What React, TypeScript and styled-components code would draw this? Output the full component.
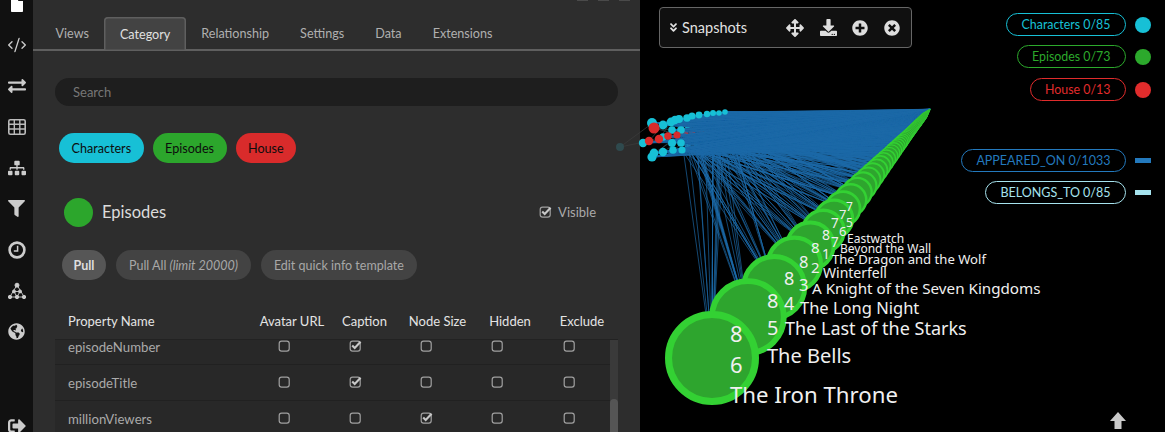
import { ReactNode } from "react";
import styled, { createGlobalStyle } from "styled-components";
import {
  FaAngleDoubleDown,
  FaArrowsAlt,
  FaDownload,
  FaExchangeAlt,
  FaFile,
  FaFilter,
  FaGlobeAmericas,
  FaPlusCircle,
  FaSignOutAlt,
  FaSitemap,
  FaTimesCircle,
} from "react-icons/fa";
import { CodeXml } from "lucide-react";

const CYAN = "#17c0d6";
const GREEN = "#2ca62c";
const RED = "#d92b2b";

const GlobalStyle = createGlobalStyle`
  html, body {
    margin: 0;
    height: 100%;
    background: #000;
    overflow: hidden;
    font-family: "Lato", "Liberation Sans", sans-serif;
  }
`;

const Page = styled.div`
  display: flex;
  width: 1165px;
  height: 432px;
  overflow: hidden;
`;

const Sidebar = styled.nav`
  width: 33px;
  flex-shrink: 0;
  height: 432px;
  background: #111;
  display: flex;
  flex-direction: column;
  align-items: center;
  color: #ccc;
  overflow: hidden;
`;

const SideItem = styled.div<{ $first?: boolean; $last?: boolean }>`
  height: 41px;
  flex-shrink: 0;
  width: 100%;
  display: flex;
  align-items: center;
  justify-content: center;
  margin-top: ${(p) => (p.$first ? "-17px" : p.$last ? "auto" : "0")};
  margin-bottom: ${(p) => (p.$last ? "-14px" : "0")};
`;

const Panel = styled.section`
  width: 607px;
  flex-shrink: 0;
  height: 432px;
  background: #2d2d2d;
  overflow: hidden;
  display: flex;
  flex-direction: column;
`;

const WindowStubs = styled.div`
  height: 2px;
  display: flex;
  justify-content: flex-end;
  gap: 10px;
  padding-right: 10px;
  flex-shrink: 0;

  span {
    width: 11px;
    height: 1px;
    background: #4a4a4a;
  }
`;

const Tabs = styled.div`
  height: 49px;
  box-sizing: border-box;
  padding: 15px 0 0 7px;
  display: flex;
  align-items: stretch;
  border-bottom: 2px solid #5f5f5f;
  flex-shrink: 0;
`;

const Tab = styled.div<{ $active?: boolean }>`
  display: flex;
  align-items: center;
  padding: 0 15.5px;
  margin: ${(p) => (p.$active ? "0 0 -2px" : "0 0 0")};
  font-size: 12.6px;
  color: ${(p) => (p.$active ? "#e0e0e0" : "#b0b0b0")};
  background: ${(p) => (p.$active ? "#434343" : "transparent")};
  box-shadow: ${(p) => (p.$active ? "inset 0 0 0 1.5px #5f5f5f" : "none")};
  border-radius: 4px 4px 0 0;
`;

const Content = styled.div`
  padding: 27px 22px 0 22px;
  display: flex;
  flex-direction: column;
`;

const Search = styled.div`
  height: 28px;
  border-radius: 14px;
  background: #1e1e1e;
  color: #777;
  font-size: 13px;
  display: flex;
  align-items: center;
  padding-left: 18px;
`;

const Chips = styled.div`
  display: flex;
  gap: 9px;
  margin: 27px 0 0 4px;
`;

const Chip = styled.div<{ $color: string }>`
  height: 30px;
  padding: 0 12.5px;
  border-radius: 15px;
  background: ${(p) => p.$color};
  color: #0d0d0d;
  font-size: 12.6px;
  display: flex;
  align-items: center;
`;

const CategoryHead = styled.div`
  display: flex;
  align-items: center;
  margin: 34px 0 0 9px;
  height: 30px;
`;

const Swatch = styled.span<{ $color: string }>`
  width: 29px;
  height: 29px;
  border-radius: 50%;
  background: ${(p) => p.$color};
`;

const CategoryName = styled.span`
  margin-left: 9px;
  font-size: 16.5px;
  color: #dcdcdc;
  flex: 1;
`;

const Visible = styled.label`
  display: flex;
  align-items: center;
  gap: 6px;
  font-size: 13px;
  color: #aaa;
  margin-right: 22px;
`;

const Actions = styled.div`
  display: flex;
  gap: 10px;
  margin: 23px 0 0 7px;
`;

const Action = styled.div<{ $primary?: boolean }>`
  height: 30px;
  padding: 0 ${(p) => (p.$primary ? "11.5px" : "13px")};
  border-radius: 15px;
  display: flex;
  align-items: center;
  gap: 3px;
  font-size: 12.5px;
  font-weight: ${(p) => (p.$primary ? 700 : 400)};
  background: ${(p) => (p.$primary ? "#565656" : "#434343")};
  color: ${(p) => (p.$primary ? "#dedede" : "#a8a8a8")};

  em {
    font-style: italic;
  }
`;

const HeaderRow = styled.div`
  display: grid;
  grid-template-columns: 201px 72px 73px 73px 72px 72px;
  margin-top: 27px;
  height: 32px;
  box-sizing: border-box;
  align-items: center;
  font-size: 13px;
  color: #e4e4e4;
  justify-items: center;
  padding-bottom: 4px;
`;

const HeaderName = styled.span`
  justify-self: start;
  padding-left: 13px;
`;

const TableBody = styled.div`
  position: relative;
  height: 120px;
  background: #282828;
  overflow: hidden;
  border-top: 1px solid #222;
`;

const Row = styled.div<{ $first?: boolean }>`
  display: grid;
  grid-template-columns: 193px 72px 71px 71px 71px 72px;
  height: 36px;
  box-sizing: border-box;
  margin-top: ${(p) => (p.$first ? "-11px" : "0")};
  align-items: center;
  justify-items: center;
  border-bottom: 1px solid #212121;
  font-size: 13.2px;
  color: #aaa;
`;

const RowName = styled.span`
  justify-self: start;
  padding-left: 13px;
`;

const ScrollTrack = styled.div`
  position: absolute;
  top: 0;
  right: 0;
  bottom: 0;
  width: 8px;
  background: #3a3a3a;
`;

const ScrollThumb = styled.div`
  position: absolute;
  top: 59px;
  left: 0;
  right: 0;
  bottom: 0;
  border-radius: 4px 4px 0 0;
  background: #555;
`;

const Canvas = styled.main`
  position: relative;
  flex: 1;
  height: 432px;
  background: #000;
`;

const GraphSvg = styled.svg`
  position: absolute;
  left: 0;
  top: 0;
  overflow: visible;
`;

const NodeLabel = styled.text`
  font-family: "Noto Sans", "Open Sans", sans-serif;
  fill: #f0f0f0;
  dominant-baseline: central;
`;

const SnapshotBar = styled.div`
  position: absolute;
  left: 19px;
  top: 7px;
  width: 253px;
  height: 41px;
  box-sizing: border-box;
  background: #101010;
  border: 1px solid #666;
  border-radius: 4px;
  display: flex;
  align-items: center;
  padding-left: 8px;
  color: #e2e2e2;
`;

const SnapshotTitle = styled.span`
  font-size: 14.5px;
  margin-left: 3px;
  margin-right: 39px;
`;

const SnapshotIcons = styled.div`
  display: flex;
  align-items: center;
  gap: 15.5px;
  color: #ddd;
`;

const Legend = styled.div`
  position: absolute;
  right: 14px;
  top: 13px;
  display: flex;
  flex-direction: column;
  align-items: flex-end;
`;

const LegendRow = styled.div<{ $gap: number }>`
  display: flex;
  align-items: center;
  gap: 9px;
  height: 23px;
  margin-bottom: ${(p) => p.$gap}px;
`;

const LegendPill = styled.div<{ $color: string; $size: number }>`
  height: 23px;
  box-sizing: border-box;
  border: 1px solid ${(p) => p.$color};
  border-radius: 12px;
  color: ${(p) => p.$color};
  font-size: ${(p) => p.$size}px;
  display: flex;
  align-items: center;
  padding: 0 14.5px;
`;

const LegendDot = styled.span<{ $color: string }>`
  width: 16px;
  height: 16px;
  border-radius: 50%;
  background: ${(p) => p.$color};
`;

const LegendLine = styled.span<{ $color: string }>`
  width: 16px;
  height: 5px;
  background: ${(p) => p.$color};
`;

const UpArrow = styled.svg`
  position: absolute;
  left: 470px;
  top: 412px;
`;

const CheckBox = ({ checked }: { checked?: boolean }) => (
  <svg width="13" height="13" viewBox="0 0 13 13" fill="none">
    <rect x="1.2" y="1.2" width="10" height="10" rx="2.4" stroke="#a0a0a0" strokeWidth="1.2" />
    {checked && <path d="M3.2 5.4 L5.7 8 L11.6 1.8" stroke="#c8c8c8" strokeWidth="2.1" />}
  </svg>
);

const GridIcon = () => (
  <svg width="18" height="16" viewBox="0 0 18 16" fill="none" stroke="#bbb">
    <rect x="0.8" y="0.8" width="16.4" height="14.4" rx="1.5" strokeWidth="1.6" />
    <path d="M0.8 5.3 H17.2 M0.8 10 H17.2 M6.3 1 V15 M11.8 1 V15" strokeWidth="1.4" />
  </svg>
);

const ClockIcon = () => (
  <svg width="18" height="18" viewBox="0 0 18 18" fill="none" stroke="#ccc">
    <circle cx="9" cy="9" r="7.4" strokeWidth="2.6" />
    <path d="M9.6 4.8 V10 H5.8" strokeWidth="1.5" />
  </svg>
);

const HubIcon = () => (
  <svg width="18" height="18" viewBox="0 0 18 18" fill="#ccc" stroke="#ccc">
    <path d="M9 3 L1.8 15 H16.2 Z M6 9.5 H12 L9 15 Z" fill="none" strokeWidth="0.9" />
    <circle cx="9" cy="3.2" r="2" />
    <circle cx="6" cy="9.4" r="1.5" />
    <circle cx="12" cy="9.4" r="1.5" />
    <circle cx="2" cy="15" r="1.7" />
    <circle cx="9" cy="15" r="1.7" />
    <circle cx="16" cy="15" r="1.7" />
  </svg>
);

type CharNode = { x: number; y: number; r: number; color: string };

const row = (pts: number[][], color: string): CharNode[] =>
  pts.map(([x, y, r]) => ({ x, y, r, color }));

const houses = row(
  [
    [654, 128, 5.5], [649, 141, 4.2], [659, 139, 4.2], [668, 136, 3.8], [677, 135, 3.6], [685, 133, 3.4],
    [692, 132, 3], [701, 131, 2.8], [707, 130, 2.6], [715, 128, 2.4], [722, 128, 2.2], [728, 127, 2],
  ],
  RED
);

const topRow = row(
  [
    [652, 123, 5], [663, 125, 4.4], [671, 122, 4.4], [675, 120, 4.2], [679, 119, 4], [687, 118, 3.8],
    [692, 116, 3.6], [699, 115, 3.4], [707, 114, 3.2], [713, 113, 3], [719, 113, 2.8], [725, 112, 2.8],
  ],
  CYAN
);

const lowerRows = row(
  [
    [672, 130, 3.8], [681, 130, 3.8], [688, 125, 3.6], [697, 123, 3.4], [705, 123, 3.2], [713, 120, 3], [722, 116, 2.8],
    [643, 143, 4.2], [663, 137, 3.8], [672, 143, 4], [681, 143, 3.8], [688, 142, 3.6], [697, 140, 3.4],
    [705, 137, 3], [713, 135, 2.8], [720, 132, 2.6], [652, 157, 4.6], [654, 153, 4.4], [663, 152, 4.2],
    [673, 150, 3.8], [682, 150, 3.6], [688, 148, 3.4], [697, 146, 3], [705, 143, 2.8],
  ],
  CYAN
);

const characters = [...topRow, ...lowerRows];
const farNodes = [...lowerRows, ...houses].filter((n) => n.x >= 685);
const nearNodes = [...topRow, ...lowerRows.filter((n) => n.x < 685), ...houses.filter((n) => n.x < 685)];
const fanSources = characters.filter((n) => n.x >= 676);

const episodes = Array.from({ length: 73 }, (_, i) => {
  const s = 1 / (1 + 0.18 * i);
  const taper = Math.min(1, (72 - i) / 25 + 0.2);
  return {
    i,
    x: 712 + 235 * (1 - s),
    y: 358 - 268 * (1 - s),
    r: 47 * Math.pow(s, 1.15) * taper,
  };
});

// small seeded generator so the edges are the same on every render
let seed = 7;
const rand = () => {
  seed = (seed * 16807) % 2147483647;
  return seed / 2147483647;
};

const edges = episodes.flatMap((ep) => {
  const pool = ep.i < 22 ? fanSources : characters;
  return Array.from({ length: ep.i < 12 ? 14 : 18 }, () => {
    const from = pool[Math.floor(rand() * pool.length)];
    return { x1: from.x, y1: from.y, x2: ep.x, y2: ep.y };
  });
});

const belongs = characters.slice(0, 32).map((c, i) => {
  const h = houses[i % houses.length];
  return { x1: c.x, y1: c.y, x2: h.x, y2: h.y };
});

const labels: [number, number, number, string][] = [
  [847, 238, 12, "Eastwatch"],
  [846, 222, 12, "5"],
  [846, 206, 12, "7"],
  [840, 248, 12, "Beyond the Wall"],
  [839, 231, 13, "6"],
  [839, 214, 13, "7"],
  [832, 259, 13.1, "The Dragon and the Wolf"],
  [831, 242, 13.5, "7"],
  [831, 223, 13.5, "7"],
  [823, 272, 14, "Winterfell"],
  [822, 253, 14, "1"],
  [822, 234, 14, "8"],
  [812, 288, 15.2, "A Knight of the Seven Kingdoms"],
  [811, 267, 15, "2"],
  [811, 247, 15, "8"],
  [800, 307, 16.5, "The Long Night"],
  [799, 284, 16.5, "3"],
  [799, 261, 16.5, "8"],
  [785, 328, 18, "The Last of the Starks"],
  [784, 303, 18, "4"],
  [784, 278, 18, "8"],
  [767, 355, 20, "The Bells"],
  [767, 327, 20, "5"],
  [767, 300, 20, "8"],
  [730, 394, 22.2, "The Iron Throne"],
  [730, 364, 22, "6"],
  [730, 333, 22, "8"],
];

const Graph = () => (
  <GraphSvg width="525" height="432" viewBox="640 0 525 432">
    <path d="M620 147 L650 125 M620 147 L649 141" stroke="#3c3c3c" strokeWidth="0.7" />
    <circle cx="620" cy="147" r="4" fill="#2f4a4e" />
    {belongs.map((e, i) => (
      <line key={i} x1={e.x1} y1={e.y1} x2={e.x2} y2={e.y2} stroke="#46646a" strokeWidth="0.5" />
    ))}
    {farNodes.map((n, i) => (
      <circle key={i} cx={n.x} cy={n.y} r={n.r} fill={n.color} />
    ))}
    {edges.map((e, i) => (
      <line key={i} x1={e.x1} y1={e.y1} x2={e.x2} y2={e.y2} stroke="#1c6aa8" strokeWidth="0.8" strokeOpacity="0.85" />
    ))}
    {nearNodes.map((n, i) => (
      <circle key={i} cx={n.x} cy={n.y} r={n.r} fill={n.color} />
    ))}
    {[...episodes].reverse().map((ep) => {
      const ring = Math.max(ep.r * 0.15, 0.5);
      return (
        <circle
          key={ep.i}
          cx={ep.x}
          cy={ep.y}
          r={ep.r - ring / 2}
          fill="#2ea52e"
          stroke="#33d133"
          strokeWidth={ring}
        />
      );
    })}
    {labels.map(([x, y, size, text], i) => (
      <NodeLabel key={i} x={x} y={y} fontSize={size}>
        {text}
      </NodeLabel>
    ))}
  </GraphSvg>
);

const sideIcons: ReactNode[] = [
  <FaFile size={16} color="#fff" />,
  <CodeXml size={20} strokeWidth={1.6} />,
  <FaExchangeAlt size={18} />,
  <GridIcon />,
  <FaSitemap size={18} />,
  <FaFilter size={17} />,
  <ClockIcon />,
  <HubIcon />,
  <FaGlobeAmericas size={17} />,
];

const tabNames = ["Views", "Category", "Relationship", "Settings", "Data", "Extensions"];

const properties = [
  { name: "episodeNumber", checks: [false, true, false, false, false] },
  { name: "episodeTitle", checks: [false, true, false, false, false] },
  { name: "millionViewers", checks: [false, false, true, false, false] },
];

const legendNodes = [
  { label: "Characters 0/85", color: CYAN, gap: 9 },
  { label: "Episodes 0/73", color: "#2ca92c", gap: 10 },
  { label: "House 0/13", color: "#e02c2c", gap: 48 },
];

const App = () => (
  <>
    <GlobalStyle />
    <Page>
      <Sidebar>
        {sideIcons.map((icon, i) => (
          <SideItem key={i} $first={i === 0}>
            {icon}
          </SideItem>
        ))}
        <SideItem $last>
          <FaSignOutAlt size={18} />
        </SideItem>
      </Sidebar>

      <Panel>
        <WindowStubs>
          <span />
          <span />
          <span />
        </WindowStubs>
        <Tabs>
          {tabNames.map((name) => (
            <Tab key={name} $active={name === "Category"}>
              {name}
            </Tab>
          ))}
        </Tabs>
        <Content>
          <Search>Search</Search>
          <Chips>
            <Chip $color={CYAN}>Characters</Chip>
            <Chip $color={GREEN}>Episodes</Chip>
            <Chip $color={RED}>House</Chip>
          </Chips>
          <CategoryHead>
            <Swatch $color={GREEN} />
            <CategoryName>Episodes</CategoryName>
            <Visible>
              <CheckBox checked />
              Visible
            </Visible>
          </CategoryHead>
          <Actions>
            <Action $primary>Pull</Action>
            <Action>
              Pull All <em>(limit 20000)</em>
            </Action>
            <Action>Edit quick info template</Action>
          </Actions>
          <HeaderRow>
            <HeaderName>Property Name</HeaderName>
            <span>Avatar URL</span>
            <span>Caption</span>
            <span>Node Size</span>
            <span>Hidden</span>
            <span>Exclude</span>
          </HeaderRow>
          <TableBody>
            {properties.map((p, i) => (
              <Row key={p.name} $first={i === 0}>
                <RowName>{p.name}</RowName>
                {p.checks.map((c, j) => (
                  <CheckBox key={j} checked={c} />
                ))}
              </Row>
            ))}
            <ScrollTrack>
              <ScrollThumb />
            </ScrollTrack>
          </TableBody>
        </Content>
      </Panel>

      <Canvas>
        <Graph />
        <SnapshotBar>
          <FaAngleDoubleDown size={11} />
          <SnapshotTitle>Snapshots</SnapshotTitle>
          <SnapshotIcons>
            <FaArrowsAlt size={18} />
            <FaDownload size={17} />
            <FaPlusCircle size={16} />
            <FaTimesCircle size={16} />
          </SnapshotIcons>
        </SnapshotBar>
        <Legend>
          {legendNodes.map((n) => (
            <LegendRow key={n.label} $gap={n.gap}>
              <LegendPill $color={n.color} $size={12.4}>{n.label}</LegendPill>
              <LegendDot $color={n.color} />
            </LegendRow>
          ))}
          <LegendRow $gap={9}>
            <LegendPill $color="#2379bd" $size={12.5}>APPEARED_ON 0/1033</LegendPill>
            <LegendLine $color="#2379bd" />
          </LegendRow>
          <LegendRow $gap={0}>
            <LegendPill $color="#a6e3ee" $size={12.5}>BELONGS_TO 0/85</LegendPill>
            <LegendLine $color="#a6e3ee" />
          </LegendRow>
        </Legend>
        <UpArrow width="16" height="18" viewBox="0 0 16 18">
          <path d="M8 0 L16 9 H11.5 V17 H4.5 V9 H0 Z" fill="#c9c9c9" />
        </UpArrow>
      </Canvas>
    </Page>
  </>
);

export default App;
